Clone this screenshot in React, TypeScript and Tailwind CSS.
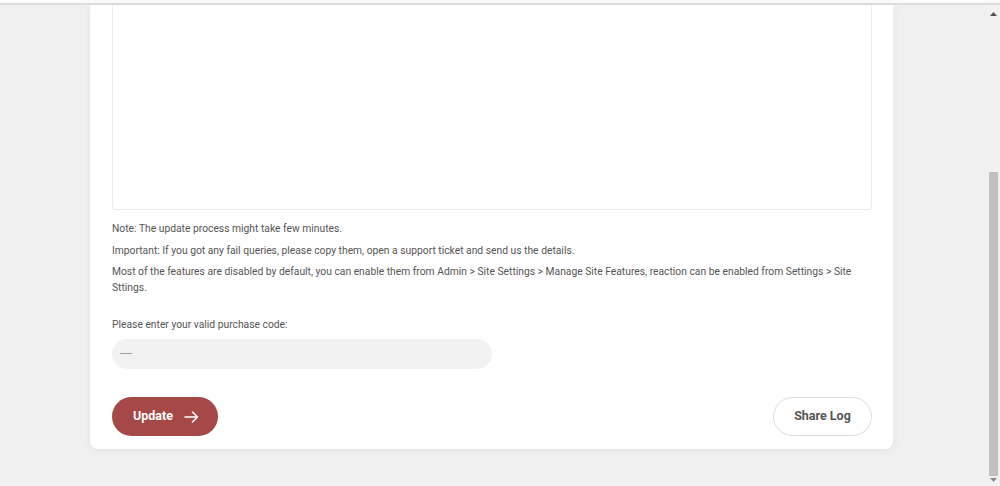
import React from "react";

const notes = [
  "Note: The update process might take few minutes.",
  "Important: If you got any fail queries, please copy them, open a support ticket and send us the details.",
  "Most of the features are disabled by default, you can enable them from Admin > Site Settings > Manage Site Features, reaction can be enabled from Settings > Site Sttings.",
];

const Scrollbar: React.FC = () => (
  <div className="w-[14px] bg-[#f1f1f1] flex flex-col items-center">
    <svg width="7" height="4" viewBox="0 0 7 4" className="mt-[7px]">
      <path d="M0 4 L3.5 0 L7 4 Z" fill="#505050" />
    </svg>
    <div className="flex-1" />
    <div className="w-[9px] h-[304px] bg-[#c1c1c1] ml-[1px]" />
    <svg width="7" height="4" viewBox="0 0 7 4" className="mt-[2px] mb-[4px]">
      <path d="M0 0 L3.5 4 L7 0 Z" fill="#8a8a8a" />
    </svg>
  </div>
);

export default function App() {
  return (
    <div
      className="w-[1000px] h-[486px] flex flex-col overflow-hidden bg-[#f0f0f0]"
      style={{ fontFamily: "Roboto, 'Liberation Sans', sans-serif" }}
    >
      <div className="h-[3px] bg-[#fafafa]" />
      <div className="h-[2px] bg-[#dcdcdc]" />
      <div className="flex-1 flex min-h-0">
        <div className="flex-1 min-w-0">
          <div className="ml-[90px] w-[803px] bg-white rounded-b-lg shadow-[0_2px_8px_rgba(0,0,0,0.06)] pl-[22px] pr-[21px] pb-[13px]">
            <div className="h-[205px] border border-t-0 border-[#ececec] rounded-b-[3px]" />
            <div className="mt-[11px] text-[10.3px] leading-[16px] text-[#555]">
              {notes.map((n) => (
                <p key={n} className="mb-[5.5px]">
                  {n}
                </p>
              ))}
            </div>
            <p className="mt-[21px] text-[10.3px] leading-[16px] text-[#555]">
              Please enter your valid purchase code:
            </p>
            <div className="mt-[6px] w-[380px] h-[30px] rounded-full bg-[#f2f2f2] flex items-center px-[8px] text-[11px] text-[#888]">
              ----
            </div>
            <div className="mt-[28px] flex justify-between items-center">
              <button className="h-[39px] w-[106px] rounded-full bg-[#a64848] text-white text-[12.5px] font-bold flex items-center pl-[21px] gap-[11px]">
                Update
                <svg width="15" height="12" viewBox="0 0 15 12" fill="none">
                  <path
                    d="M1 6 H13.5 M8.5 1 L13.5 6 L8.5 11"
                    stroke="white"
                    strokeWidth="1.5"
                    strokeLinecap="round"
                    strokeLinejoin="round"
                  />
                </svg>
              </button>
              <button className="h-[39px] w-[99px] rounded-full border border-[#dcdcdc] bg-white text-[#555] text-[12.5px] font-bold">
                Share Log
              </button>
            </div>
          </div>
        </div>
        <Scrollbar />
      </div>
    </div>
  );
}
